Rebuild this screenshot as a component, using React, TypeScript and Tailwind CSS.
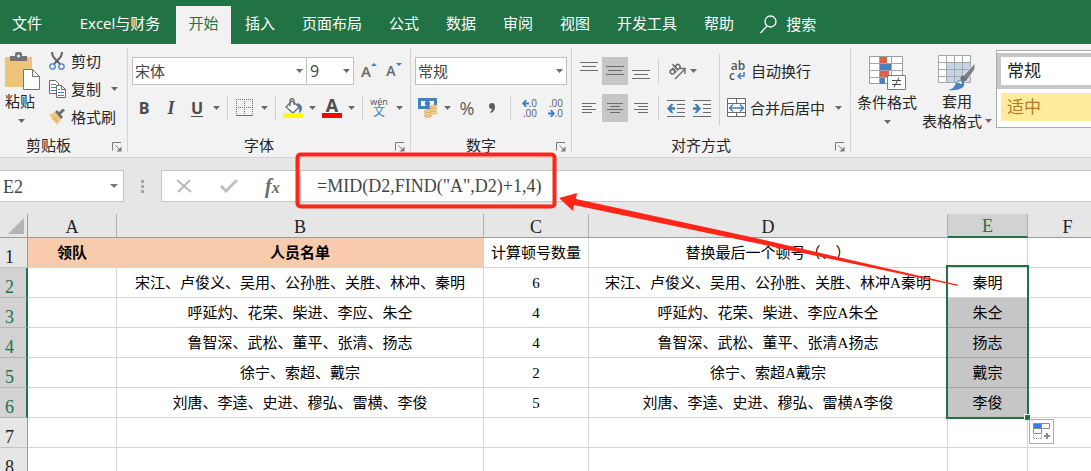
import type { ReactNode } from "react";

const TABS = ["插入", "页面布局", "公式", "数据", "审阅", "视图", "开发工具", "帮助"];

const ROWS = [
  { names: "宋江、卢俊义、吴用、公孙胜、关胜、林冲、秦明", count: "6", replaced: "宋江、卢俊义、吴用、公孙胜、关胜、林冲A秦明", result: "秦明" },
  { names: "呼延灼、花荣、柴进、李应、朱仝", count: "4", replaced: "呼延灼、花荣、柴进、李应A朱仝", result: "朱仝" },
  { names: "鲁智深、武松、董平、张清、扬志", count: "4", replaced: "鲁智深、武松、董平、张清A扬志", result: "扬志" },
  { names: "徐宁、索超、戴宗", count: "2", replaced: "徐宁、索超A戴宗", result: "戴宗" },
  { names: "刘唐、李逵、史进、穆弘、雷横、李俊", count: "5", replaced: "刘唐、李逵、史进、穆弘、雷横A李俊", result: "李俊" },
];

const CELL = "h-[30px] overflow-visible whitespace-nowrap border-b border-r border-[#d4d4d4] p-0 text-center font-normal";

function Caret({ label, className = "" }: { label: string; className?: string }) {
  return (
    <button type="button" aria-label={label} className={`flex h-7 w-3 shrink-0 items-center justify-center ${className}`}>
      <svg width="7" height="4" viewBox="0 0 7 4"><path d="M0 0h7L3.500 4z" fill="#6a6a6a" /></svg>
    </button>
  );
}

function SelectCaret() {
  return (
    <svg className="pointer-events-none absolute right-1 top-3" width="7" height="4" viewBox="0 0 7 4">
      <path d="M0 0h7L3.500 4z" fill="#6a6a6a" />
    </svg>
  );
}

function Sep({ className = "" }: { className?: string }) {
  return <span className={`h-[25px] w-px shrink-0 bg-[#d0d0d0] ${className}`} />;
}

function IconButton({ label, className = "", children }: { label: string; className?: string; children: ReactNode }) {
  return (
    <button type="button" aria-label={label} className={`flex h-7 shrink-0 items-center justify-center ${className}`}>
      {children}
    </button>
  );
}

function Group({ label, className, labelClass = "", children }: { label: string; className: string; labelClass?: string; children: ReactNode }) {
  return (
    <section aria-label={label} className={`flex shrink-0 ${className}`}>
      <div className="flex min-w-0 flex-1 flex-col justify-between pb-[2px]">
        {children}
        <div className="flex h-5 items-center">
          <span className={`flex-1 text-center leading-5 ${labelClass}`}>{label}</span>
          <button type="button" aria-label={`${label}设置`} className="flex h-5 w-5 items-center justify-center pt-1">
            <svg width="10" height="10" viewBox="0 0 10 10" fill="none" stroke="#7a7a7a">
              <path d="M.5 8.500V.5H9M3.500 3.500l4 4" />
              <path d="M9.500 4.500v5h-5z" fill="#7a7a7a" stroke="none" />
            </svg>
          </button>
        </div>
      </div>
      <span className="mb-[5px] mt-1 w-px bg-[#d2d2d2]" />
    </section>
  );
}

function Lines({ rows, width = 18, height = 18 }: { rows: [number, number, number][]; width?: number; height?: number }) {
  return (
    <svg width={width} height={height} fill="#6b6b6b">
      {rows.map(([x, y, w]) => <rect key={y} x={x} y={y} width={w} height="1" />)}
    </svg>
  );
}

function ScissorsIcon() {
  return (
    <svg width="17" height="18" viewBox="0 0 17 18" fill="none">
      <path d="M3 0c0 4 1 5 8 12M13 0c0 4-1 5-8 12" stroke="#636363" strokeWidth="2" />
      <circle cx="3.500" cy="14.500" r="2.700" stroke="#4a81bd" strokeWidth="1.300" />
      <circle cx="12.500" cy="14.500" r="2.700" stroke="#4a81bd" strokeWidth="1.300" />
    </svg>
  );
}

function CopyIcon() {
  return (
    <svg width="18" height="18" viewBox="0 0 18 18" fill="#fff" stroke="#6b6b6b">
      <path d="M.5.500h6l3 3v10h-9z" />
      <path d="M2 4.500h5M2 7.500h5M2 10.500h5" stroke="#4a81bd" />
      <path d="M7.500 5.500h5l4 4v8h-9z" /><path d="M12.500 5.500v4h4" fill="none" />
      <path d="M9 9.500h2M9 12.500h6M9 15.500h6" stroke="#4a81bd" />
    </svg>
  );
}

function BrushIcon() {
  return (
    <svg width="17" height="16" viewBox="0 0 17 16">
      <path d="M0 6l6-3 6 7-4 6z" fill="#eec77c" /><path d="M3 9l3 3M5 8l4 5" stroke="#d8ab5c" />
      <path d="M6 3l2-2 6 7-2 2z" fill="#6e6e6e" /><path d="M10 5l5-4.500" stroke="#6e6e6e" strokeWidth="3" />
    </svg>
  );
}

function PasteIcon() {
  return (
    <svg width="35" height="39" viewBox="0 0 35 39">
      <rect y="5" width="27" height="30" rx="1" fill="#edc57a" />
      <path d="M5 9V4h5V2q0-2 2-2h3q2 0 2 2v2h5v5z" fill="#737373" /><circle cx="13.500" cy="4" r="1.500" fill="#f2f2f2" />
      <path d="M18.500 17.500h9l7 7v13h-16z" fill="#fff" stroke="#737373" />
      <path d="M27.500 17.500v7h7" fill="none" stroke="#737373" />
    </svg>
  );
}

function BorderIcon() {
  return (
    <svg width="18" height="18" viewBox="0 0 18 18" fill="#6b6b6b">
      <g stroke="#6b6b6b" fill="none">
        <path d="M0 .5h17M0 8.500h17" strokeDasharray="1 1" />
        <path d="M.5 0v16M8.500 0v16M16.500 0v16" strokeDasharray="1 1" />
      </g>
      <path d="M0 16h17v1H0z" />
    </svg>
  );
}

function FillIcon() {
  return (
    <svg width="20" height="20" viewBox="0 0 20 20" fill="none">
      <path d="M14 5q5 1 5 5t-3 5q1-5-3-7z" fill="#4a81bd" />
      <path d="M3 9l6-6 7 6-6 6z" fill="#fff" stroke="#6b6b6b" strokeWidth="1.300" />
      <path d="M7 8V2q2-3 4 0v5" stroke="#6b6b6b" strokeWidth="1.300" />
      <path d="M0 15h20v5H0z" fill="#ffff00" />
    </svg>
  );
}

function MoneyIcon() {
  return (
    <svg width="20" height="20" viewBox="0 0 20 20">
      <path d="M0 0h19v11H0z" fill="#4a81bd" /><path d="M3 3h13v5H3z" fill="#fff" /><circle cx="9.500" cy="5.500" r="2.700" fill="#4a81bd" />
      <path d="M12 7h7v10h-7zM6 12h8v7H6z" fill="#f2f2f2" />
      <g fill="#f2d39a" stroke="#dfaa55" strokeWidth=".8">
        <ellipse cx="15.500" cy="14.500" rx="3.500" ry="1.400" /><ellipse cx="15.500" cy="11.500" rx="3.500" ry="1.400" /><ellipse cx="15.500" cy="8.500" rx="3.500" ry="1.400" />
        <ellipse cx="10" cy="18" rx="3.700" ry="1.400" /><ellipse cx="10" cy="15.500" rx="3.700" ry="1.400" /><ellipse cx="10" cy="13" rx="3.700" ry="1.400" />
      </g>
    </svg>
  );
}

function Arrow({ left = false, className = "" }: { left?: boolean; className?: string }) {
  return (
    <svg className={className} width="7" height="7" viewBox="0 0 7 7">
      <path d={left ? "M0 3.500L3 0h2L3.500 2.500H7v2H3.500L5 7H3z" : "M7 3.500L4 0H2l1.500 2.500H0v2h3.500L2 7h2z"} fill="#3f7dbd" />
    </svg>
  );
}

function IndentIcon({ left = false }: { left?: boolean }) {
  return (
    <svg width="19" height="17" viewBox="0 0 19 17">
      <path d="M0 .5h18M10 4.500h8M10 8.500h8M10 12.500h8M0 16.500h18" stroke="#6b6b6b" />
      <path d={left ? "M0 8.500L4 4h2.500L4.200 7.300H8v2.400H4.200L6.500 13H4z" : "M8 8.500L4 4H1.500l2.300 3.300H0v2.400h3.800L1.500 13H4z"} fill="#3f7dbd" />
    </svg>
  );
}

function OrientationIcon() {
  return (
    <svg width="20" height="18" viewBox="0 0 20 18" fill="none" stroke="#6b6b6b">
      <g transform="rotate(-43 7 7)" strokeWidth="1.500">
        <circle cx="4" cy="8" r="2.300" /><path d="M6.500 5v6M9 2.500V11" /><circle cx="11.300" cy="8" r="2.300" />
      </g>
      <path d="M8 17L17.500 7.500M12.500 6.500h5.500V12" strokeWidth="1.400" />
    </svg>
  );
}

function MergeIcon() {
  return (
    <svg width="20" height="20" viewBox="0 0 20 20" fill="none" stroke="#6b6b6b">
      <path d="M.5.500h18v18H.5z" fill="#fff" /><path d="M.5 5.500h18M.5 14.500h18M9.500.500v5M9.500 14.500v4" />
      <path d="M3 10h13M6 6.500L2.500 10 6 13.500M13 6.500l3.500 3.500-3.500 3.500" stroke="#3f7dbd" strokeWidth="1.400" />
    </svg>
  );
}

function ConditionalIcon() {
  return (
    <svg width="37" height="36" viewBox="0 0 37 36">
      <path d="M.5.500h33v27H.5z" fill="#fff" stroke="#9c9c9c" />
      <path d="M.5 7.500h33M.5 14.500h33M.5 21.500h33M10.500.500v27M22.500.500v27" stroke="#a6a6a6" />
      <path d="M11 1h7v6h-7zM11 15h9v6h-9z" fill="#dc6245" /><path d="M11 8h11v6H11zM11 22h5v6h-5z" fill="#4a81bd" />
      <path d="M18.500 19.500h18v14h-18z" fill="#fff" stroke="#7a7a7a" />
      <path d="M23 24.500h9M23 28.500h9M30 21.500l-5 10" stroke="#4a4a4a" />
    </svg>
  );
}

function TableFormatIcon() {
  return (
    <svg width="38" height="36" viewBox="0 0 38 36">
      <path d="M.5.500h32v27H.5z" fill="#fff" /><path d="M9 8h24v20H9z" fill="#c1d4ea" />
      <path d="M.5.500h32v27H.5zM.5 7.500h32M.5 14.500h32M.5 21.500h32M8.500.500v27M16.500.500v27M24.500.500v27" fill="none" stroke="#a6a6a6" />
      <path d="M37 8v6L28 27l-5-4z" fill="#808080" stroke="#f2f2f2" />
      <path d="M29 24l-5-4-2 4 4 3z" fill="#6e6e6e" />
      <path d="M10 35q6-1 8-7 3-5 7-2 3 4-1 7-5 3-14 2z" fill="#4a81bd" /><path d="M20 28q3-3 3 1" fill="none" stroke="#fff" strokeWidth="1.500" />
    </svg>
  );
}

function Ribbon() {
  return (
    <div className="flex h-[114px] shrink-0 overflow-hidden border-b border-[#d2d2d2] bg-[#f2f2f2]">
      <Group label="剪贴板" className="w-32" labelClass="pr-[10px]">
        <div className="flex pl-[5px] pt-[3px]">
          <button type="button" className="flex w-[35px] flex-col items-start pt-[5px]">
            <PasteIcon />
            <span className="leading-5">粘贴</span>
            <svg className="ml-[13px] mt-2" width="7" height="4" viewBox="0 0 7 4"><path d="M0 0h7L3.500 4z" fill="#6a6a6a" /></svg>
          </button>
          <div className="ml-[9px]">
            <button type="button" className="flex h-7 items-center gap-1"><span className="w-[18px]"><ScissorsIcon /></span>剪切</button>
            <div className="flex">
              <button type="button" className="flex h-7 items-center gap-1"><span className="w-[18px]"><CopyIcon /></span>复制</button>
              <Caret label="复制选项" className="ml-[7px]" />
            </div>
            <button type="button" className="flex h-7 items-center gap-1"><span className="w-[18px]"><BrushIcon /></span>格式刷</button>
          </div>
        </div>
      </Group>

      <Group label="字体" className="w-[283px]">
        <div className="flex flex-col gap-[9px] pt-[13px]">
          <div className="flex h-7 pl-1">
            <div className="relative w-[175px]">
              <select aria-label="字体名称" className="h-7 w-full appearance-none border border-[#c0c0c0] bg-white pl-[2px] leading-6 text-[#444]"><option>宋体</option></select>
              <SelectCaret />
            </div>
            <div className="relative -ml-px w-12">
              <select aria-label="字号" className="h-7 w-full appearance-none border border-[#c0c0c0] bg-white pl-[3px] text-base leading-6 text-[#444]"><option>9</option></select>
              <SelectCaret />
            </div>
            <IconButton label="增大字号" className="ml-[7px] w-4 font-semibold text-[#666]">
              A<svg className="mb-[14px]" width="6" height="3"><path d="M0 3l3-3 3 3z" fill="#3f7dbd" /></svg>
            </IconButton>
            <IconButton label="减小字号" className="ml-[9px] w-4 text-sm font-semibold text-[#666]">
              A<svg className="mb-[14px]" width="6" height="3"><path d="M0 0l3 3 3-3z" fill="#3f7dbd" /></svg>
            </IconButton>
          </div>
          <div className="flex h-7 items-center pl-[2px] text-[#4d4d4d]">
            <IconButton label="加粗" className="w-7 text-base font-bold">B</IconButton>
            <IconButton label="倾斜" className="w-[26px] font-['Liberation_Serif',serif] text-lg font-bold italic">I</IconButton>
            <IconButton label="下划线" className="w-[26px] text-base font-bold underline underline-offset-2">U</IconButton>
            <Caret label="下划线选项" />
            <Sep className="ml-[5px] mr-2" />
            <IconButton label="边框" className="w-[18px]"><BorderIcon /></IconButton>
            <Caret label="边框选项" className="ml-1" />
            <Sep className="ml-[5px] mr-[7px]" />
            <IconButton label="填充颜色" className="w-5"><FillIcon /></IconButton>
            <Caret label="填充颜色选项" className="ml-[3px]" />
            <button type="button" aria-label="字体颜色" className="ml-1 flex h-7 w-5 shrink-0 flex-col items-center justify-center">
              <span className="h-[15px] text-lg font-bold leading-[15px]">A</span>
              <span className="h-[5px] w-5 bg-[#ff0000]" />
            </button>
            <Caret label="字体颜色选项" className="ml-[3px]" />
            <Sep className="ml-[5px] mr-[7px]" />
            <button type="button" aria-label="拼音指南" className="flex h-7 w-[18px] shrink-0 flex-col items-center justify-center">
              <span className="text-[9px] leading-[8px]">wén</span>
              <span className="text-xs leading-[12px] text-[#3f7dbd]">文</span>
            </button>
            <Caret label="拼音选项" className="ml-[5px]" />
          </div>
        </div>
      </Group>

      <Group label="数字" className="w-[161px]">
        <div className="flex flex-col gap-[9px] pt-[13px]">
          <div className="relative ml-1 w-[152px]">
            <select aria-label="数字格式" className="block h-7 w-full appearance-none border border-[#c0c0c0] bg-white pl-[2px] leading-6 text-[#444]"><option>常规</option></select>
            <SelectCaret />
          </div>
          <div className="flex h-7 items-center pl-[7px] text-[#5c5c5c]">
            <IconButton label="会计格式" className="w-5"><MoneyIcon /></IconButton>
            <Caret label="会计格式选项" className="ml-[3px]" />
            <IconButton label="百分比" className="ml-[5px] w-[18px] text-lg">%</IconButton>
            <IconButton label="千位分隔" className="ml-2 w-4">
              <svg width="7" height="10" viewBox="0 0 7 10"><path d="M1 9q2-1 2-3Q0 6 0 3t3-3q3 0 3 4 0 4-4 6z" fill="#5c5c5c" /></svg>
            </IconButton>
            <Sep className="ml-[10px] mr-2" />
            <button type="button" aria-label="增加小数位" className="flex h-7 w-[18px] shrink-0 flex-col items-end justify-center text-[10px] leading-[10px]">
              <span className="flex items-center"><Arrow left />.0</span><span>.00</span>
            </button>
            <button type="button" aria-label="减少小数位" className="ml-2 flex h-7 w-[18px] shrink-0 flex-col items-end justify-center text-[10px] leading-[10px]">
              <span>.00</span><span className="flex items-center"><Arrow />.0</span>
            </button>
          </div>
        </div>
      </Group>

      <Group label="对齐方式" className="w-[279px]">
        <div className="flex pl-1 pt-[13px]">
          <div className="flex flex-col gap-[9px]">
            <div className="flex h-7 items-center">
              <IconButton label="顶端对齐" className="w-[26px]"><Lines rows={[[0, 0, 18], [2, 4, 14], [0, 8, 18]]} height={18} /></IconButton>
              <IconButton label="垂直居中" className="w-[26px] bg-[#c6c6c6]"><Lines rows={[[0, 4, 18], [2, 8, 14], [0, 12, 18]]} height={18} /></IconButton>
              <IconButton label="底端对齐" className="w-[26px]"><Lines rows={[[0, 8, 18], [2, 12, 14], [0, 16, 18]]} height={18} /></IconButton>
              <Sep className="ml-1 mr-2" />
              <IconButton label="方向" className="w-5"><OrientationIcon /></IconButton>
              <Caret label="方向选项" />
            </div>
            <div className="flex h-7 items-center">
              <IconButton label="左对齐" className="w-[26px]"><Lines rows={[[0, 0, 14], [0, 3, 10], [0, 6, 14], [0, 9, 10]]} width={14} height={11} /></IconButton>
              <IconButton label="居中" className="w-[26px] bg-[#c6c6c6]"><Lines rows={[[0, 0, 16], [3, 3, 10], [0, 6, 16], [3, 9, 10]]} width={16} height={11} /></IconButton>
              <IconButton label="右对齐" className="w-[26px]"><Lines rows={[[0, 0, 14], [4, 3, 10], [0, 6, 14], [4, 9, 10]]} width={14} height={11} /></IconButton>
              <Sep className="ml-1 mr-2" />
              <IconButton label="减少缩进" className="w-[19px]"><IndentIcon left /></IconButton>
              <IconButton label="增加缩进" className="ml-[7px] w-[19px]"><IndentIcon /></IconButton>
            </div>
          </div>
          <span className="-mt-[3px] ml-[7px] mr-[7px] h-[71px] w-px bg-[#d0d0d0]" />
          <div className="flex flex-col gap-[9px]">
            <button type="button" className="flex h-7 items-center gap-1">
              <span className="flex w-5 flex-col pl-[2px] text-xs font-semibold leading-[10px] text-[#555]">
                <span>ab</span>
                <span className="flex items-center gap-px">c<svg width="9" height="8" viewBox="0 0 9 8" fill="none" stroke="#3f7dbd" strokeWidth="1.500"><path d="M8 0v4H2M5 1L2 4l3 3" /></svg></span>
              </span>
              自动换行
            </button>
            <div className="flex">
              <button type="button" className="flex h-7 items-center gap-[3px] whitespace-nowrap"><MergeIcon />合并后居中</button>
              <Caret label="合并选项" className="ml-[7px]" />
            </div>
          </div>
        </div>
      </Group>

      <section aria-label="样式" className="flex min-w-0 flex-1 pl-[6px] pt-[6px]">
        <button type="button" className="flex w-[60px] shrink-0 flex-col items-center pt-[6px]">
          <ConditionalIcon />
          <span className="leading-[20px]">条件格式</span>
          <svg className="mt-2" width="7" height="4" viewBox="0 0 7 4"><path d="M0 0h7L3.500 4z" fill="#6a6a6a" /></svg>
        </button>
        <button type="button" className="ml-1 flex w-[72px] shrink-0 flex-col items-center pt-[5px]">
          <TableFormatIcon />
          <span className="leading-[20px]">套用</span>
          <span className="flex items-center gap-[3px] whitespace-nowrap leading-[20px]">表格格式
            <svg width="7" height="4" viewBox="0 0 7 4"><path d="M0 0h7L3.500 4z" fill="#6a6a6a" /></svg>
          </span>
        </button>
        <div className="ml-[3px] h-[78px] min-w-24 flex-1 border-y border-l border-[#ababab] bg-white pt-[2px] text-[17px]">
          <button type="button" className="flex h-9 w-full items-center border-4 border-r-0 border-[#c6c6c6] bg-white pl-[6px] text-[#222]">常规</button>
          <div className="pl-1 pt-1">
            <button type="button" className="flex h-7 w-full items-center bg-[#ffeb9c] pl-[6px] text-[#b57a1b]">适中</button>
          </div>
        </div>
      </section>
    </div>
  );
}

function FormulaBar() {
  return (
    <div className="flex h-14 shrink-0 items-center bg-[#e6e6e6] font-['Liberation_Serif','Noto_Sans_CJK_SC',serif] text-lg text-[#444]">
      <div className="relative w-[124px] shrink-0">
        <input aria-label="名称框" defaultValue="E2" className="block h-8 w-full border border-l-0 border-[#c6c6c6] bg-white pl-[3px] pt-[2px] outline-none" />
        <svg className="pointer-events-none absolute right-[6px] top-[14px]" width="8" height="4" viewBox="0 0 8 4"><path d="M0 0h8L4 4z" fill="#777" /></svg>
      </div>
      <svg className="ml-[17px] shrink-0" width="3" height="13" fill="#a6a6a6"><path d="M0 0h3v3H0zM0 5h3v3H0zM0 10h3v3H0z" /></svg>
      <div className="ml-[17px] flex h-8 w-[136px] shrink-0 items-center border border-r-0 border-[#c6c6c6] bg-white">
        <button type="button" aria-label="取消" className="ml-[14px]">
          <svg width="16" height="14" fill="none" stroke="#b8b8b8" strokeWidth="2"><path d="M1 1l14 12M14 1L2 13" /></svg>
        </button>
        <button type="button" aria-label="输入" className="ml-7">
          <svg width="18" height="14" fill="none" stroke="#c0c0c0" strokeWidth="3"><path d="M1 7l5 5L17 1" /></svg>
        </button>
        <button type="button" aria-label="插入函数" className="ml-[27px] text-xl font-bold italic leading-7 text-[#6a6a6a]">f<span className="text-base">x</span></button>
      </div>
      <input aria-label="编辑栏" defaultValue={'=MID(D2,FIND("A",D2)+1,4)'} className="ml-[3px] block h-8 min-w-0 flex-1 border border-r-0 border-[#c6c6c6] bg-white pl-4 outline-none" />
    </div>
  );
}

function RowHead({ n, selected = false }: { n: number; selected?: boolean }) {
  return (
    <th
      scope="row"
      className={`h-[30px] border-b p-0 pl-[5px] pt-2 text-left text-lg font-normal leading-5 ${
        selected ? "border-b-[#b5b5b5] border-r-2 border-r-[#217346] bg-[#d2d2d2] text-[#217346]" : "border-b-[#c4c4c4] border-r border-r-[#9b9b9b] bg-[#e6e6e6] text-[#222]"
      }`}
    >
      {n}
    </th>
  );
}

function Sheet() {
  return (
    <div className="min-h-0 flex-1 overflow-hidden bg-white">
      <table className="w-full min-w-[1108px] table-fixed border-separate border-spacing-0 font-['Liberation_Serif','Noto_Sans_CJK_SC',serif] text-[15px] leading-5 text-black [text-spacing-trim:space-all]">
        <colgroup>
          <col className="w-7" /><col className="w-[89px]" /><col className="w-[367px]" /><col className="w-[105px]" />
          <col className="w-[359px]" /><col className="w-20" /><col />
        </colgroup>
        <thead>
          <tr className="bg-[#e6e6e6] text-lg leading-5 text-[#222]">
            <td className="h-6 border-b border-r border-[#9b9b9b] p-0">
              <svg className="ml-2" width="16" height="16"><path d="M16 0v16H0z" fill="#b4b4b4" /></svg>
            </td>
            {["A", "B", "C", "D", "E", "F"].map((c) => (
              <th
                key={c}
                scope="col"
                className={`h-6 border-r p-0 pt-[2px] font-normal ${
                  c === "E" ? "border-b-2 border-b-[#217346] border-r-[#b0b0b0] bg-[#d2d2d2] text-[#217346]" : "border-b border-b-[#9b9b9b] border-r-[#b0b0b0]"
                }`}
              >
                {c}
              </th>
            ))}
          </tr>
        </thead>
        <tbody>
          <tr>
            <RowHead n={1} />
            <td className={`${CELL} border-r-[#f8cbad] bg-[#f8cbad]`}><b>领队</b></td>
            <td className={`${CELL} bg-[#f8cbad]`}><b>人员名单</b></td>
            <td className={CELL}>计算顿号数量</td>
            <td className={CELL}>替换最后一个顿号（、）</td>
            <td className={CELL} /><td className={CELL} />
          </tr>
          {ROWS.map((row, i) => (
            <tr key={row.result}>
              <RowHead n={i + 2} selected />
              <td className={CELL} />
              <td className={CELL}>{row.names}</td>
              <td className={CELL}>{row.count}</td>
              <td className={CELL}>{row.replaced}</td>
              <td className={`${CELL} relative ${i === 0 ? "" : "border-b-[#a3a3a3] bg-[#c6c6c6]"}`}>
                {row.result}
                {i === ROWS.length - 1 && (
                  <>
                    <span className="pointer-events-none absolute -left-[2px] -right-[2px] -bottom-[2px] h-[154px] border-2 border-[#217346]" />
                    <span className="absolute -bottom-[3px] -right-[3px] h-[6px] w-[6px] border-l border-t border-white bg-[#217346]" />
                    <button type="button" aria-label="自动填充选项" className="absolute left-[81px] top-[31px] z-10 flex h-[25px] w-[25px] items-center justify-center border border-[#ababab] bg-white">
                      <svg width="18" height="17" viewBox="0 0 18 17" fill="none" stroke="#8a8a8a">
                        <path d="M.5.500h16v5H.5zM8.500.500v5M.5 5.500v5h8v-5" /><path d="M1 1h7v4H1z" fill="#3478ff" stroke="none" />
                        <path d="M.5 12v3.500h8V12" strokeDasharray="1 1" /><path d="M14 10v6M11 13h6" strokeWidth="2" />
                      </svg>
                    </button>
                  </>
                )}
              </td>
              <td className={CELL} />
            </tr>
          ))}
          {[7, 8].map((n) => (
            <tr key={n}>
              <RowHead n={n} />
              {["A", "B", "C", "D", "E", "F"].map((c) => <td key={c} className={CELL} />)}
            </tr>
          ))}
        </tbody>
      </table>
    </div>
  );
}

export default function App() {
  return (
    <div className="relative flex h-screen flex-col overflow-hidden bg-white font-['Open_Sans','Noto_Sans_CJK_SC',sans-serif] text-[15px] text-[#262626]">
      <nav aria-label="功能区" className="flex h-11 shrink-0 items-end whitespace-nowrap bg-[#217346] text-white">
        <button type="button" className="h-[38px] w-[54px] pb-[3px]">文件</button>
        <button type="button" className="ml-[10px] h-[38px] w-28 pb-[3px]">Excel与财务</button>
        <button type="button" className="h-[38px] w-[55px] bg-[#f2f2f2] pb-[3px] text-[#217346]">开始</button>
        <div className="flex">
          {TABS.map((t) => (
            <button key={t} type="button" className="h-[38px] px-[13px] pb-[3px] pl-[14px]">{t}</button>
          ))}
        </div>
        <button type="button" className="ml-[13px] flex h-[38px] items-center gap-[9px] pb-[2px]">
          <svg width="17" height="19" viewBox="0 0 17 19" fill="none" stroke="#fff" strokeWidth="1.300"><circle cx="10.500" cy="6.500" r="5.500" /><path d="M7 11L.5 18" /></svg>
          搜索
        </button>
      </nav>
      <Ribbon />
      <FormulaBar />
      <Sheet />
      <svg className="pointer-events-none absolute left-[294px] top-[150px]" width="670" height="140" viewBox="294 150 670 140">
        <rect x="297.500" y="154.500" width="257" height="52" rx="3" fill="none" stroke="#ff2517" strokeWidth="4" />
        <path d="M559 198L577 193l-1 6L760 239 958 284.800v1.200L760 244 574 205l-1 6z" fill="#ff2517" />
      </svg>
    </div>
  );
}
